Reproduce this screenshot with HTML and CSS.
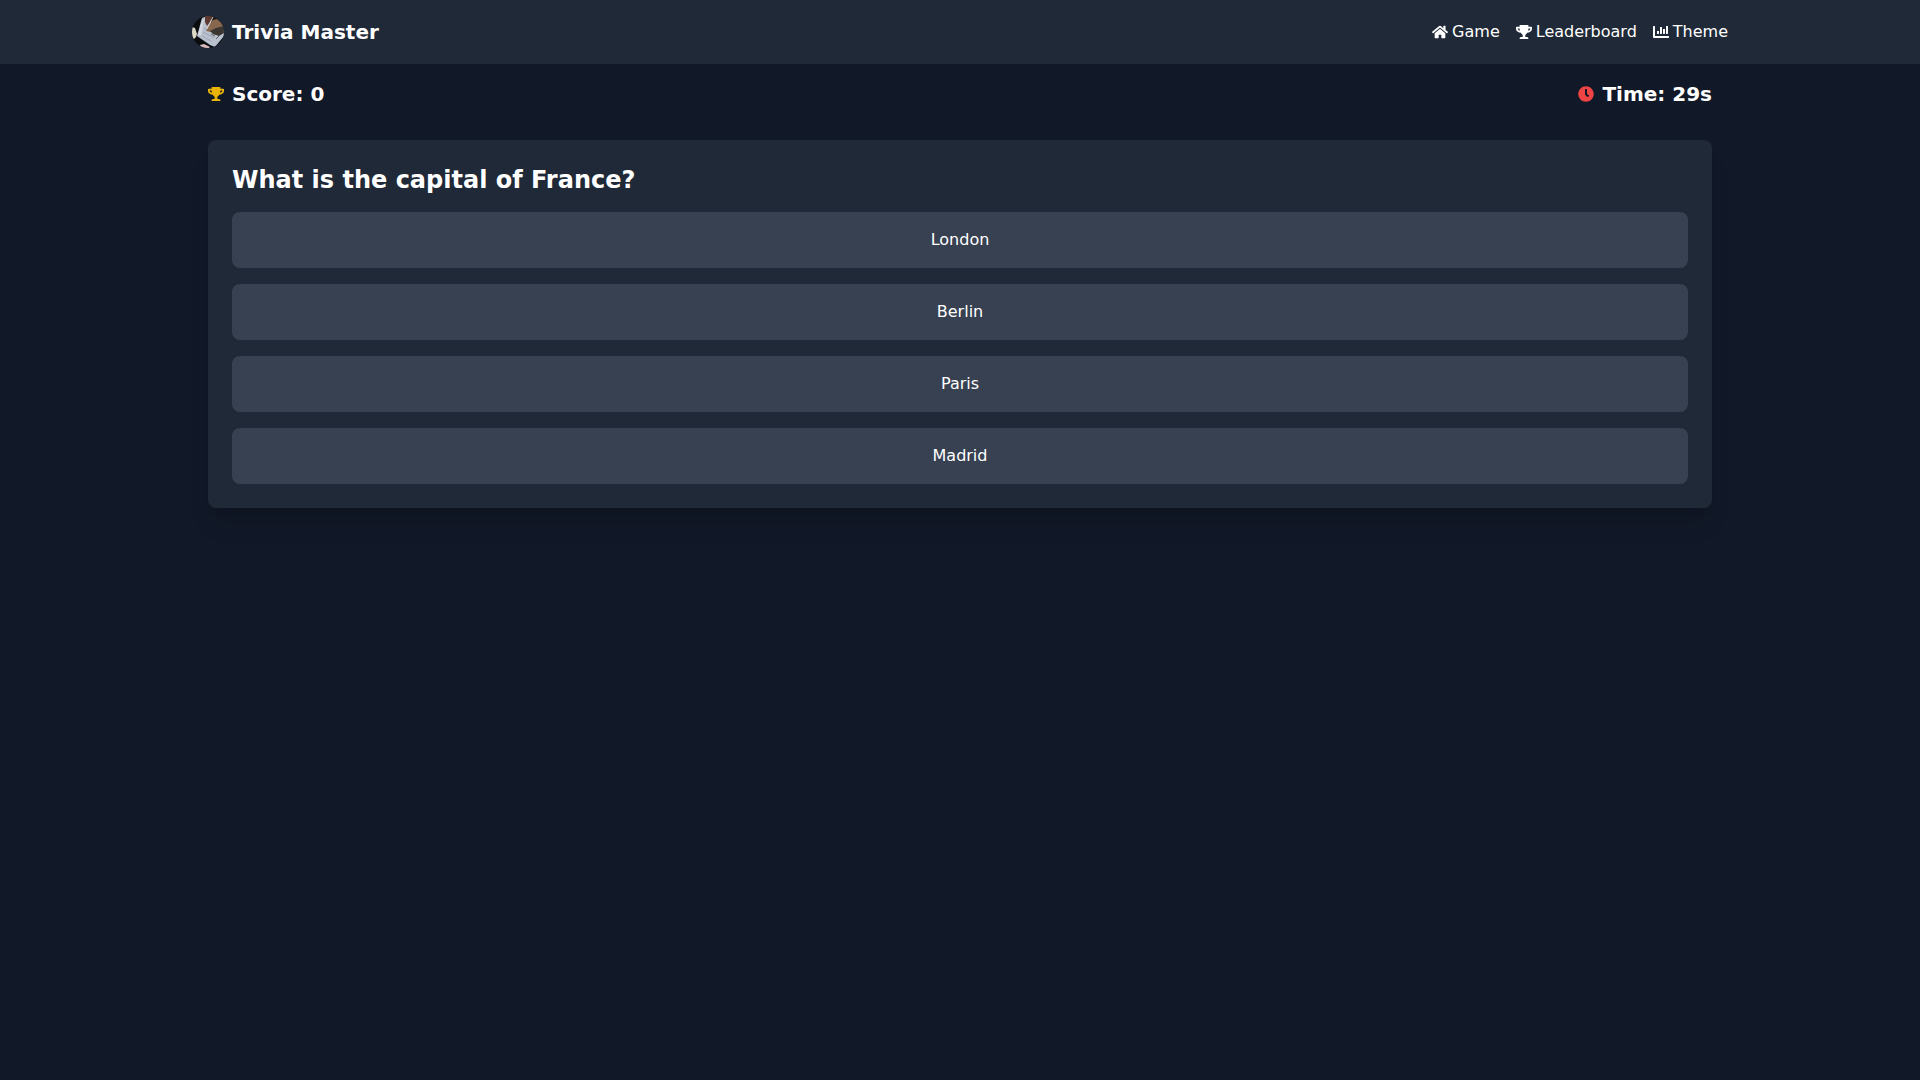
FILE: index.html
```
<!DOCTYPE html>
<html lang="en">

<head>
    <meta charset="UTF-8">
    <meta name="viewport" content="width=device-width, initial-scale=1.0">
    <title>Trivia Master</title>
    <link rel="stylesheet" href="styles.css">
</head>

<body>
    <header class="header">
        <div class="container header-inner">
            <div class="brand">
                <svg class="logo" viewBox="0 0 32 32" aria-hidden="true">
                    <rect width="32" height="32" fill="#0b0c10" />
                    <!-- plate and napkin -->
                    <path d="M0 11L3 12L5 18L4 21L2 23L0 21Z" fill="#dcdac6" />
                    <path d="M8 29L12 28L18 31L17 32H9Z" fill="#dcbcbc" />
                    <!-- paper -->
                    <path d="M10 2L15 0L32 14V20L23 31L18 29L5 20Z" fill="#b9c0ce" />
                    <path d="M10 4L12 3L9 19L6 19Z" fill="#d3d8e1" />
                    <path d="M12 12L18 15M11 16L22 22M10 20L19 25" fill="none" stroke="#9ca3b2" stroke-width="1" />
                    <!-- hands -->
                    <path d="M13 0H21L18 6L15 10L13 6Z" fill="#5d3a32" />
                    <path d="M21 0H32V14L24 12L17 13Z" fill="#17130f" />
                    <path d="M14 15L17 9L21 4L25 3L31 8L32 12L26 13L19 16Z" fill="#87674d" />
                    <path d="M18 15L24 12L32 10V17L27 20L21 18Z" fill="#3b3632" />
                    <path d="M21 1L15 13" fill="none" stroke="#d8d0ca" stroke-width="1" />
                    <path d="M19 18L23 20M24 23L27 20" fill="none" stroke="#5c6068" stroke-width="1" />
                </svg>
                <h1 class="brand-name">Trivia Master</h1>
            </div>
            <nav class="nav">
                <a class="nav-item" href="#game">
                    <svg class="icon" viewBox="0 0 576 512" aria-hidden="true">
                        <path d="M280.37 148.26L96 300.11V464a16 16 0 0 0 16 16l112.06-.29a16 16 0 0 0 15.92-16V368a16 16 0 0 1 16-16h64a16 16 0 0 1 16 16v95.64a16 16 0 0 0 16 16.05L464 480a16 16 0 0 0 16-16V300L295.67 148.26a12.19 12.19 0 0 0-15.3 0zM571.6 251.47L488 182.56V44.05a12 12 0 0 0-12-12h-56a12 12 0 0 0-12 12v72.61L318.47 43a48 48 0 0 0-61 0L4.34 251.47a12 12 0 0 0-1.6 16.9l25.5 31A12 12 0 0 0 45.15 301l235.22-193.74a12.19 12.19 0 0 1 15.3 0L530.9 301a12 12 0 0 0 16.9-1.6l25.5-31a12 12 0 0 0-1.7-16.93z" />
                    </svg>
                    Game
                </a>
                <a class="nav-item" href="#leaderboard">
                    <svg class="icon" viewBox="0 0 576 512" aria-hidden="true">
                        <path id="trophy" d="M552 64H448V24c0-13.3-10.7-24-24-24H152c-13.3 0-24 10.7-24 24v40H24C10.7 64 0 74.7 0 88v56c0 35.7 22.5 72.4 61.9 100.7 31.5 22.7 69.8 37.1 110 41.7C203.3 338.5 240 360 240 360v72h-48c-35.3 0-64 20.7-64 56v12c0 6.6 5.4 12 12 12h296c6.6 0 12-5.4 12-12v-12c0-35.3-28.7-56-64-56h-48v-72s36.7-21.5 68.1-73.6c40.3-4.6 78.6-19 110-41.7 39.3-28.3 61.9-65 61.9-100.7V88c0-13.3-10.7-24-24-24zM99.3 192.8C74.9 175.2 64 155.6 64 144v-16h64.2c1 32.6 5.8 61.2 12.8 86.2-15.1-5.2-29.2-12.4-41.7-21.4zM512 144c0 16.1-17.7 36.1-35.3 48.8-12.5 9-26.7 16.2-41.8 21.4 7-25 11.8-53.6 12.8-86.2H512v16z" />
                    </svg>
                    Leaderboard
                </a>
                <button class="nav-item" type="button">
                    <svg class="icon" viewBox="0 0 512 512" aria-hidden="true">
                        <path d="M332.8 320h38.4c6.4 0 12.8-6.4 12.8-12.8V172.8c0-6.4-6.4-12.8-12.8-12.8h-38.4c-6.4 0-12.8 6.4-12.8 12.8v134.4c0 6.4 6.4 12.8 12.8 12.8zm96 0h38.4c6.4 0 12.8-6.4 12.8-12.8V76.8c0-6.4-6.4-12.8-12.8-12.8h-38.4c-6.4 0-12.8 6.4-12.8 12.8v230.4c0 6.4 6.4 12.8 12.8 12.8zm-288 0h38.4c6.4 0 12.8-6.4 12.8-12.8v-70.4c0-6.4-6.4-12.8-12.8-12.8h-38.4c-6.4 0-12.8 6.4-12.8 12.8v70.4c0 6.4 6.4 12.8 12.8 12.8zm96 0h38.4c6.4 0 12.8-6.4 12.8-12.8V108.8c0-6.4-6.4-12.8-12.8-12.8h-38.4c-6.4 0-12.8 6.4-12.8 12.8v198.4c0 6.4 6.4 12.8 12.8 12.8zM496 384H64V80c0-8.84-7.16-16-16-16H16C7.16 64 0 71.16 0 80v336c0 17.67 14.33 32 32 32h464c8.84 0 16-7.16 16-16v-32c0-8.84-7.16-16-16-16z" />
                    </svg>
                    Theme
                </button>
            </nav>
        </div>
    </header>

    <main class="container game">
        <div class="status">
            <div class="status-item">
                <svg class="icon icon-score" viewBox="0 0 576 512" aria-hidden="true">
                    <use href="#trophy" />
                </svg>
                <span>Score: 0</span>
            </div>
            <div class="status-item">
                <svg class="icon icon-time" viewBox="0 0 512 512" aria-hidden="true">
                    <path d="M256,8C119,8,8,119,8,256S119,504,256,504,504,393,504,256,393,8,256,8Zm92.49,313h0l-20,25a16,16,0,0,1-22.49,2.5h0l-67-49.72a40,40,0,0,1-15-31.23V112a16,16,0,0,1,16-16h32a16,16,0,0,1,16,16V256l58,42.5A16,16,0,0,1,348.49,321Z" />
                </svg>
                <span>Time: 29s</span>
            </div>
        </div>

        <section class="card">
            <h2 class="question">What is the capital of France?</h2>
            <div class="options">
                <button class="option" type="button">London</button>
                <button class="option" type="button">Berlin</button>
                <button class="option" type="button">Paris</button>
                <button class="option" type="button">Madrid</button>
            </div>
        </section>
    </main>
</body>

</html>
```
FILE: styles.css
```
* {
    box-sizing: border-box;
    margin: 0;
    padding: 0;
}

body {
    min-height: 100vh;
    background-color: #111827;
    color: #fff;
    font-family: "DejaVu Sans", sans-serif;
    font-size: 16px;
    line-height: 24px;
}

button {
    border: none;
    background: none;
    color: inherit;
    font: inherit;
    cursor: pointer;
}

.container {
    width: 100%;
    max-width: 1536px;
    margin: 0 auto;
}

.header {
    padding: 16px;
    background-color: #1f2937;
}

.header-inner {
    display: flex;
    justify-content: space-between;
    align-items: center;
}

.brand {
    display: flex;
    align-items: center;
    gap: 8px;
}

.logo {
    width: 32px;
    height: 32px;
    border-radius: 50%;
}

.brand-name {
    font-size: 20px;
    line-height: 28px;
    font-weight: bold;
}

.nav {
    display: flex;
    gap: 16px;
}

.nav-item {
    display: flex;
    align-items: center;
    gap: 4px;
    color: inherit;
    text-decoration: none;
}

.nav-item:hover {
    color: #d1d5db;
}

.icon {
    width: 16px;
    height: 16px;
    fill: currentColor;
}

.icon-score {
    color: #eab308;
}

.icon-time {
    color: #ef4444;
}

.game {
    padding: 16px;
}

.status {
    display: flex;
    justify-content: space-between;
    align-items: center;
    margin-bottom: 32px;
}

.status-item {
    display: flex;
    align-items: center;
    gap: 8px;
    font-size: 20px;
    line-height: 28px;
    font-weight: bold;
}

.card {
    padding: 24px;
    border-radius: 8px;
    background-color: #1f2937;
    box-shadow: 0 20px 25px -5px rgba(0, 0, 0, 0.1), 0 8px 10px -6px rgba(0, 0, 0, 0.1);
}

.question {
    margin-bottom: 16px;
    font-size: 24px;
    line-height: 32px;
    font-weight: bold;
}

.options {
    display: grid;
    gap: 16px;
}

.option {
    padding: 16px;
    border-radius: 8px;
    background-color: #374151;
    text-align: center;
}

.option:hover {
    background-color: #4b5563;
}
```
